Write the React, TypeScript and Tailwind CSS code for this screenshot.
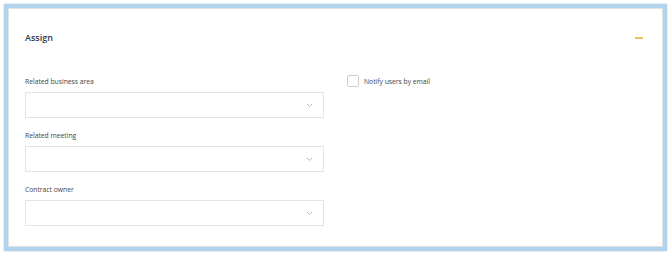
import React from "react";

const fontStack = { fontFamily: '"Open Sans", "Liberation Sans", sans-serif' };

const Chevron = () => (
  <svg width="7" height="5" viewBox="0 0 7 5" fill="none">
    <path d="M1 1l2.5 2.5L6 1" stroke="#b8b8b8" strokeWidth="1" />
  </svg>
);

const SelectField: React.FC<{ label: string }> = ({ label }) => (
  <div className="flex flex-col">
    <label className="text-[6.75px] leading-[14px] text-[#444] pt-[2px] mb-[3px]">{label}</label>
    <div className="h-[26px] w-[299px] border border-[#e4e4e4] bg-white flex items-center justify-end pr-[10px]">
      <Chevron />
    </div>
  </div>
);

export default function App() {
  return (
    <div className="w-[670px] h-[255px] bg-white pt-1 pl-1" style={fontStack}>
      <div className="w-[663px] h-[247px] border-4 border-[#b0d4eb] shadow-[0_0_2px_#b0d4eb]">
        <div className="h-full border border-[#e2e2e2] bg-white">
          <div className="flex items-center justify-between pl-[16px] pr-[19px] pt-[19px] h-[39px]">
            <h2 className="text-[9px] font-semibold text-[#2f3b4a] leading-[20px]">Assign</h2>
            <span className="block w-[8px] h-[2px] bg-[#f3c165]" />
          </div>
          <div className="flex pl-[16px] mt-[25px] gap-[23px]">
            <div className="flex flex-col gap-[9px]">
              <SelectField label="Related business area" />
              <SelectField label="Related meeting" />
              <SelectField label="Contract owner" />
            </div>
            <div className="flex items-start gap-[5px]">
              <span className="block w-[12px] h-[12px] mt-[2px] border border-[#cfcfcf] rounded-[2px] bg-white" />
              <span className="text-[6.75px] leading-[14px] pt-[2px] text-[#444]">Notify users by email</span>
            </div>
          </div>
        </div>
      </div>
    </div>
  );
}
